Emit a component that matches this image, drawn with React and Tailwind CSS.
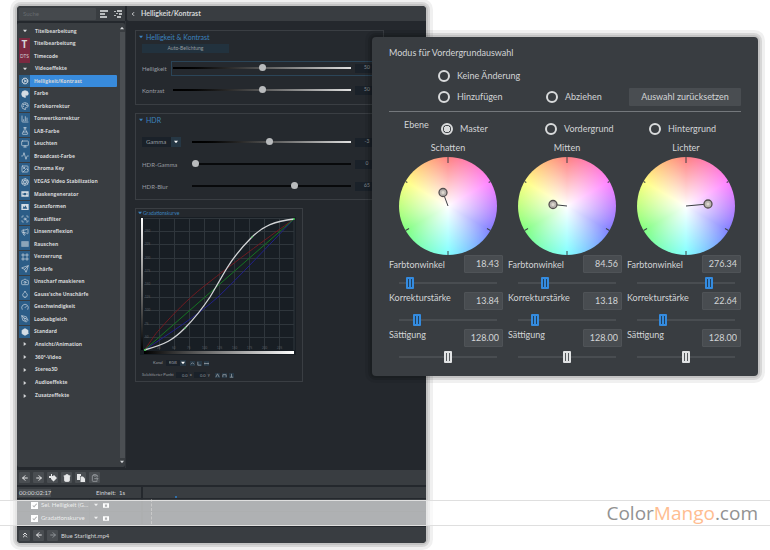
import React from "react";
import {
  Activity, ArrowLeft, ArrowRight, Aperture, BarChart3, Camera, ChevronsUp,
  ClipboardPaste, Copy, Droplet, FlaskConical, Gauge, Hexagon, Image, Monitor,
  Palette, PenTool, Send, Trash2, Megaphone, Cog, ChevronLeft, Diamond, Frame, ScanSearch,
} from "lucide-react";

const shadow =
  "shadow-[0_0_0_2px_rgba(0,0,0,0.09),0_0_0_4px_rgba(0,0,0,0.1),0_0_0_7px_rgba(0,0,0,0.06)]";

function Noise({ className }) {
  return (
    <svg viewBox="0 0 24 24" className={className}>
      <path fill="#9fb4c6" d="M1 4h22v16H1z" />
      <path stroke="#6f8ea8" strokeWidth="1" d="M1 8h22M1 12h22M1 16h22M6 4v16M12 4v16M18 4v16" />
    </svg>
  );
}

function Mask({ className }) {
  return (
    <svg viewBox="0 0 24 24" className={className} fill="currentColor" fillRule="evenodd">
      <path d="M1 4h22v16H1zM5 8l4 4-4 4zM12 8a4 4 0 1 0 .1 0zM19 8v8l-2-4z" />
    </svg>
  );
}

function Punch({ className }) {
  return (
    <svg viewBox="0 0 24 24" className={className} fill="currentColor" fillRule="evenodd">
      <path d="M1 3h22v18H1zM5 17l3-8 3 4 2-6 6 10z" />
    </svg>
  );
}

const effects = [
  ["Helligkeit/Kontrast", Cog],
  ["Farbe", Palette, true],
  ["Farbkorrektur", Palette],
  ["Tonwertkorrektur", BarChart3],
  ["LAB-Farbe", FlaskConical],
  ["Leuchten", Monitor],
  ["Broadcast-Farbe", Activity],
  ["Chroma Key", Image],
  ["VEGAS Video Stabilization", Aperture],
  ["Maskengenerator", Mask],
  ["Stanzformen", Punch],
  ["Kunstfilter", ScanSearch],
  ["Linsenreflexion", Megaphone],
  ["Rauschen", Noise],
  ["Verzerrung", Frame],
  ["Schärfe", Send],
  ["Unscharf maskieren", Camera],
  ["Gauss'sche Unschärfe", Droplet],
  ["Geschwindigkeit", Gauge],
  ["Lookabgleich", PenTool],
  ["Standard", Hexagon, true],
];

function Triangle({ dir = "down", className = "" }) {
  const d = { down: "M0 1h6L3 5z", up: "M0 5h6L3 1z", right: "M1 0v6l4-3z" }[dir];
  return (
    <svg viewBox="0 0 6 6" className={`size-[4px] shrink-0 fill-current ${className}`}>
      <path d={d} />
    </svg>
  );
}

function Group({ open, children }) {
  return (
    <button type="button" className="flex min-h-0 flex-1 items-center gap-[8px] pl-[6px] text-left">
      <Triangle dir={open ? "down" : "right"} />
      {children}
    </button>
  );
}

function TitleItem({ mark, big, children }) {
  return (
    <button type="button" className="flex min-h-0 flex-1 items-center gap-[4px] pl-[2px] text-left">
      <span className={`flex h-full w-[11px] items-center justify-center bg-[#7a2940] ${big ? "text-[10px]" : "text-[5px] font-normal"}`}>
        {mark}
      </span>
      {children}
    </button>
  );
}

function Sidebar() {
  return (
    <aside className="flex w-[108px] shrink-0 flex-col">
      <div className="flex h-[15px] items-center bg-[#393d41] pl-[2px]">
        <input
          aria-label="Suche"
          placeholder="Suche"
          className="h-[12px] w-[77px] rounded-[1px] bg-[#45494d] px-[4px] text-[6px] outline-none placeholder:text-[#666b6f]"
        />
        <button type="button" aria-label="Liste" className="ml-[4px]">
          <svg viewBox="0 0 8 8" className="size-[8px] fill-[#b9bcbe]"><path d="M0 0h8v2H0zM0 3h5v2H0zM0 6h7v2H0z" /></svg>
        </button>
        <button type="button" aria-label="Struktur" className="ml-[6px]">
          <svg viewBox="0 0 8 8" className="size-[8px] fill-[#b9bcbe]"><path d="M0 1h2v1H0zM3 0h5v2H3zM2 3h2v1H2zM5 3h3v2H5zM0 5h2v1H0zM3 6h4v2H3z" /></svg>
        </button>
      </div>
      <div className="mt-[2px] flex h-[444px] rounded-[2px] bg-[#393d41] font-['Open_Sans','Noto_Sans',sans-serif] text-[5px] leading-none font-bold">
        <nav className="flex min-w-0 flex-1 flex-col pt-[2px] whitespace-nowrap">
          <div className="flex h-[50px] flex-col">
            <Group open>Titelbearbeitung</Group>
            <TitleItem mark="T" big>Titelbearbeitung</TitleItem>
            <TitleItem mark="DTS">Timecode</TitleItem>
            <Group open>Videoeffekte</Group>
          </div>
          <div className="flex h-[263px] flex-col">
            {effects.map(([name, Icon, solid], i) => (
              <button key={name} type="button" className="flex min-h-0 flex-1 items-center pl-[2px] text-left">
                <span className="flex h-[12px] w-[11px] items-center justify-center bg-[#2c5d87] text-[#d5dde4]">
                  <Icon className="size-[8px]" fill={solid ? "currentColor" : "none"} strokeWidth={2} />
                </span>
                <span className={i === 0 ? "flex h-[12px] w-[87px] items-center rounded-r-[1px] bg-[#388bdc] pl-[4px]" : "pl-[4px]"}>
                  {name}
                </span>
              </button>
            ))}
          </div>
          <div className="flex h-[64px] flex-col">
            <Group>Ansicht/Animation</Group>
            <Group>360°-Video</Group>
            <Group>Stereo3D</Group>
            <Group>Audioeffekte</Group>
            <Group>Zusatzeffekte</Group>
          </div>
        </nav>
        <div className="flex w-[6px] flex-col items-center gap-[2px] py-[3px]">
          <Triangle dir="up" />
          <div className="w-[5px] flex-1 bg-[#4b4f53]" />
          <Triangle />
        </div>
      </div>
    </aside>
  );
}

const roundThumb =
  "[&::-webkit-slider-thumb]:appearance-none [&::-webkit-slider-thumb]:size-[7px] [&::-webkit-slider-thumb]:rounded-full [&::-webkit-slider-thumb]:bg-[#b9bbbd] [&::-webkit-slider-thumb]:-mt-[3px] [&::-webkit-slider-runnable-track]:h-[2px]";

function PanelSlider({ label, value, out, control, wide, dark, active }) {
  return (
    <div className="flex h-[22px] items-center text-[6px]">
      <div className={wide ? "w-[29px] shrink-0" : "w-[48px] shrink-0"}>{control || label}</div>
      <div className={`flex h-[15px] flex-1 items-center border pl-[1px] ${active ? "border-[#2b4558]" : "border-transparent"}`}>
        <input
          type="range"
          aria-label={label}
          defaultValue={value}
          step="0.1"
          className={`h-[8px] min-w-0 flex-1 appearance-none bg-transparent ${roundThumb} ${
            dark
              ? "[&::-webkit-slider-runnable-track]:bg-[#08090b]"
              : "[&::-webkit-slider-runnable-track]:bg-linear-to-r [&::-webkit-slider-runnable-track]:from-black [&::-webkit-slider-runnable-track]:to-[#e2e2e2]"
          }`}
        />
        <output className="ml-[4px] flex h-[9px] w-[24px] items-center justify-center bg-[#1a2129] text-[5px] text-[#8b9196]">{out}</output>
      </div>
    </div>
  );
}

function Panel({ title, className = "", children }) {
  return (
    <section className={`border border-[#3a3e43] bg-[#25292e] pr-[3px] pl-[6px] ${className}`}>
      <h3 className="-ml-[3px] flex h-[12px] items-center gap-[3px] text-[#3c83bf]">
        <Triangle />
        {title}
      </h3>
      {children}
    </section>
  );
}

function Curves() {
  const xs = [159, 174, 189, 204, 219, 234, 249, 264, 279];
  const ys = [231, 244, 258, 271, 284, 297, 310, 324, 337];
  return (
    <svg viewBox="140 217 156 138" className="-ml-[2px] block h-[138px] w-[156px]" fill="none">
      <defs>
        <linearGradient id="fadeY" x2="0" y2="1"><stop stopColor="#fff" /><stop offset="1" stopColor="#000" /></linearGradient>
        <linearGradient id="fadeX"><stop stopColor="#000" /><stop offset="1" stopColor="#fff" /></linearGradient>
      </defs>
      <path fill="#181e24" d="M140 217h156v138H140z" />
      <path stroke="#2f363c" d={xs.map((x) => `M${x}.5 218V350`).join("") + ys.map((y) => `M144 ${y}.5H294`).join("") + "M144 218.5H294V350"} />
      <path fill="url(#fadeY)" d="M141 218h2v132h-2z" />
      <path fill="url(#fadeX)" d="M144 351h150v3H144z" />
      <g fill="#5a6065" fontSize="3" fontFamily="Lato, sans-serif">
        {ys.map((y, i) => <text key={y} x="145" y={y + 1}>{250 - i * 25}</text>)}
        {xs.map((x, i) => <text key={x} x={x - 2} y="349">{(i + 1) * 25}</text>)}
      </g>
      <path stroke="#701a20" d="M144.5 350C151 341 155 334 159 330C175 312 187 300 203 287C240 258 270 236 294 219" />
      <path stroke="#22208a" d="M144.5 350C170 333 198 315 218 297C238 278 270 244 294 219" />
      <path stroke="#157422" d="M144.5 350L294 219" />
      <path stroke="#d4d6d8" strokeWidth="1.3" d="M144.5 350C166 344 173 340 185 328C195 318 202 309 210 297C216 287 221 278 227 268C235 255 242 247 252 237C263 226 275 221 294 219" />
      <g fill="#35c04a">
        <circle cx="145" cy="350" r="1" /><circle cx="185" cy="328" r=".8" />
        <circle cx="252" cy="237" r=".8" /><circle cx="294" cy="219" r="1" />
      </g>
    </svg>
  );
}

function TinyButtons({ paths, names }) {
  return paths.map((d, i) => (
    <button key={d} type="button" aria-label={names[i]} className="flex size-[5px] shrink-0 items-center bg-[#263744]">
      <svg viewBox="0 0 6 6" className="size-full" fill="none" stroke="#8e969d"><path d={d} /></svg>
    </button>
  ));
}

function MainPane() {
  return (
    <div className="flex min-w-0 flex-1 flex-col">
      <header className="ml-[2px] flex h-[15px] items-center gap-[5px] rounded-bl-[2px] bg-[#393d41] pl-[3px] text-[7px] font-bold">
        <button type="button" aria-label="Zurück"><ChevronLeft className="size-[6px]" strokeWidth={4} /></button>
        <h2>Helligkeit/Kontrast</h2>
      </header>
      <div className="flex flex-1 flex-col gap-[8px] border-l border-[#303439] pt-[9px] pr-[42px] pl-[9px] text-[#979ca0]">
        <Panel title="Helligkeit & Kontrast" className="h-[75px] text-[7px]">
          <button type="button" className="mt-[1px] block h-[9px] w-[87px] bg-[#22323e] text-[5px] leading-none">Auto-Belichtung</button>
          <div className="mt-[4px]">
            <PanelSlider label="Helligkeit" value={50.3} out="50" wide active />
            <PanelSlider label="Kontrast" value={50.3} out="50" wide />
          </div>
        </Panel>
        <Panel title="HDR" className="h-[87px] text-[7px]">
          <div className="mt-[5px]">
            <PanelSlider
              label="Gamma"
              value={48.4}
              out="-3"
              control={
                <div className="relative flex w-[39px] items-center">
                  <select aria-label="HDR-Modus" className="h-[10px] w-full appearance-none bg-[#1a2129] pl-[4px] text-[6px] leading-none">
                    <option>Gamma</option>
                  </select>
                  <span className="pointer-events-none absolute right-0 flex h-[10px] w-[10px] items-center justify-center bg-[#263744] text-white">
                    <Triangle />
                  </span>
                </div>
              }
            />
            <PanelSlider label="HDR-Gamma" value={0} out="0" dark />
            <PanelSlider label="HDR-Blur" value={65.1} out="65" dark />
          </div>
        </Panel>
        <section className="h-[174px] w-[168px] border border-[#3a3e43] pl-[6px] text-[4px] leading-none">
          <h3 className="-ml-[4px] flex h-[8px] items-center gap-[1px] text-[5px] text-[#3c83bf]"><Triangle />Gradationskurve</h3>
          <Curves />
          <div className="mt-[4px] flex h-[8px] items-center gap-[2px] pl-[11px]">
            <label htmlFor="channel" className="mr-[1px]">Kanal</label>
            <span className="relative flex items-center">
              <select id="channel" className="h-[6px] w-[20px] appearance-none bg-[#1a2129] pl-[3px] leading-none"><option>RGB</option></select>
              <span className="pointer-events-none absolute right-0 bg-[#263744] p-[1px] text-white"><Triangle /></span>
            </span>
            <span className="ml-[2px] flex gap-[2px]">
              <TinyButtons names={["Kurve", "Zurücksetzen", "Speichern"]} paths={["M1 4l2-2 2 2", "M1 1v4h4", "M0 3h6M1 2v2M5 2v2"]} />
            </span>
          </div>
          <div className="mt-[4px] flex h-[8px] items-center gap-[2px]">
            <span>Selektierter Punkt</span>
            <input aria-label="x" defaultValue="0.0" className="h-[6px] w-[12px] bg-[#1a2129] text-right outline-none" />x
            <input aria-label="y" defaultValue="0.0" className="h-[6px] w-[12px] bg-[#1a2129] text-right outline-none" />y
            <span className="ml-[3px] flex gap-[2px]">
              <TinyButtons names={["Spitze", "Bogen", "Löschen"]} paths={["M1 5l2-4 2 4", "M1 5V2h4v3", "M1 5h4M3 1v4"]} />
            </span>
          </div>
        </section>
      </div>
    </div>
  );
}

function KeyframeIcon({ className }) {
  return (
    <svg viewBox="0 0 8 8" className={className} fill="currentColor">
      <path d="M0 2h2V0h1v2h1L5 1l3 3-3.500 3.500L2 5V4H0z" />
    </svg>
  );
}

function Tool({ label, icon: Icon, dim, solid }) {
  return (
    <button type="button" aria-label={label} className={`flex size-[11px] items-center justify-center rounded-[1px] bg-[#4a4e52] ${dim ? "text-[#8d9195]" : "text-[#e6e7e8]"}`}>
      <Icon className="size-[8px]" strokeWidth={3} fill={solid ? "currentColor" : "none"} />
    </button>
  );
}

function CopyIcon({ className }) {
  return (
    <svg viewBox="0 0 8 8" className={className} fill="currentColor">
      <path d="M0 0h4v2H3v4H0z" /><path d="M3.500 2.500H6L8 4.500V8H3.500z" />
    </svg>
  );
}

function Track({ name }) {
  return (
    <div className="flex h-[13px] items-center border-b border-[#33373b]">
      <label className="flex w-[72px] items-center gap-[3px] pl-[14px] whitespace-nowrap">
        <span className="relative flex">
          <input type="checkbox" defaultChecked className="peer size-[7px] appearance-none bg-white" />
          <svg viewBox="0 0 8 8" className="pointer-events-none absolute inset-0 hidden size-[7px] peer-checked:block" fill="none" stroke="#393d41" strokeWidth="1.2"><path d="M2 4l1.500 1.500L6.500 2" /></svg>
        </span>
        {name}
      </label>
      <span className="flex h-full w-[52px] items-center gap-[5px] border-l border-[#33373b] pl-[4px]">
        <Triangle />
        <svg viewBox="0 0 8 6" className="h-[5px] w-[6px]"><path fill="#fff" fillRule="evenodd" d="M0 0h8v6H0zM2.500 1.500v3h3v-3z" /></svg>
      </span>
      <span className="h-full flex-1 border-l-2 border-[#33373b]"><span className="ml-[8px] block h-full w-0 border-l border-dashed border-[#777]" /></span>
    </div>
  );
}

function EditorWindow() {
  return (
    <main className={`overflow-hidden rounded-[4px] bg-[#24282d] text-[#d4d6d8] ${shadow}`}>
      <div className="flex h-[462px]">
        <Sidebar />
        <MainPane />
      </div>
      <div className="mt-[2px] flex h-[15px] items-center gap-[3px] bg-[#393d41] pl-[2px]">
        <Tool label="Rückgängig" icon={ArrowLeft} />
        <Tool label="Wiederholen" icon={ArrowRight} />
        <Tool label="Keyframe" icon={KeyframeIcon} />
        <Tool label="Löschen" icon={Trash2} solid />
        <Tool label="Kopieren" icon={CopyIcon} />
        <Tool label="Einfügen" icon={ClipboardPaste} dim />
      </div>
      <div className="mt-[2px] flex h-[11px] items-center bg-[#393d41] text-[6px] leading-none">
        <span className="ml-[2px] bg-[#4a4e52] py-[1px]">00:00:02:17</span>
        <span className="ml-auto mr-[16px]">Einheit:&nbsp; 1s</span>
        <span className="h-full w-[285px] border-l-2 border-[#24282d]"><i className="mt-[9px] ml-[32px] block size-[2px] bg-[#2f6ea8]" /></span>
      </div>
      <div className="mt-[1px] bg-[#393d41] text-[6px] leading-none">
        <Track name="Sel. Helligkeit (G..." />
        <Track name="Gradationskurve" />
      </div>
      <footer className="mt-[2px] flex h-[16px] items-center gap-[3px] bg-[#393d41] pl-[2px] text-[6px]">
        <Tool label="Nach oben" icon={ChevronsUp} />
        <Tool label="Zurück" icon={ArrowLeft} />
        <Tool label="Vor" icon={ArrowRight} dim />
        <span>Blue Starlight.mp4</span>
      </footer>
    </main>
  );
}

function Radio({ name, label, checked }) {
  return (
    <label className="flex items-center gap-[7px]">
      <input
        type="radio"
        name={name}
        defaultChecked={checked}
        className="size-[12px] appearance-none rounded-full border-2 border-[#d9dbdc] checked:bg-[radial-gradient(circle,#d9dbdc_3px,transparent_3px)]"
      />
      {label}
    </label>
  );
}

const gripBase =
  "[&::-webkit-slider-runnable-track]:h-[2px] [&::-webkit-slider-runnable-track]:bg-[#494d51] [&::-webkit-slider-thumb]:appearance-none [&::-webkit-slider-thumb]:w-[8px] [&::-webkit-slider-thumb]:h-[12px] [&::-webkit-slider-thumb]:-mt-[5px] [&::-webkit-slider-thumb]:rounded-[1px] [&::-webkit-slider-thumb]:bg-no-repeat [&::-webkit-slider-thumb]:bg-center [&::-webkit-slider-thumb]:bg-size-[8px_8px]";
const gripBlue =
  "[&::-webkit-slider-thumb]:bg-[#348bdf] [&::-webkit-slider-thumb]:bg-[linear-gradient(90deg,transparent_2px,#213f5b_2px,#213f5b_3px,transparent_3px,transparent_5px,#213f5b_5px,#213f5b_6px,transparent_6px)]";
const gripLight =
  "[&::-webkit-slider-thumb]:bg-[#e1e3e4] [&::-webkit-slider-thumb]:bg-[linear-gradient(90deg,transparent_2px,#55595c_2px,#55595c_3px,transparent_3px,transparent_5px,#55595c_5px,#55595c_6px,transparent_6px)]";

function Setting({ label, value, pos, light, first }) {
  return (
    <div className="h-[37px]">
      <label className={`flex justify-between ${first ? "items-center" : "items-start"}`}>
        <span className="leading-[11px]">{label}</span>
        <input defaultValue={value} className="h-[18px] w-[39px] rounded-[1px] border border-[#4f5357] bg-[#484c50] pr-[3px] pb-[1px] text-right outline-none" />
      </label>
      <input
        type="range"
        aria-label={label}
        defaultValue={pos}
        step="0.1"
        className={`mt-[4px] ml-[10px] block h-[12px] w-[98px] appearance-none bg-transparent ${gripBase} ${light ? gripLight : gripBlue}`}
      />
    </div>
  );
}

function Wheel({ title, x, y, values, spots }) {
  return (
    <div>
      <h3 className="ml-[10px] w-[98px] text-center leading-[12px]">{title}</h3>
      <div className="mt-[3px] ml-[10px] size-[98px] rounded-full bg-[radial-gradient(closest-side,white,transparent),conic-gradient(#ff8080,#ff80ff,#8080ff,#80ffff,#80ff80,#ffff80,#ff8080)]">
        <svg viewBox="0 0 98 98" className="size-full" stroke="#3b3f43">
          {[0, 60, 120, 180, 240, 300].map((a) => (
            <path key={a} d={a === 0 ? "M49 0v6" : a === 60 || a === 300 ? "M49 0v2" : "M49 0v4"} transform={`rotate(${a} 49 49)`} />
          ))}
          <path d={`M49 49L${x} ${y}`} />
          <circle cx={x} cy={y} r="4" fill="#b9b4b0" strokeWidth="1.3" stroke="#55504f" />
          <circle cx={x} cy={y} r="1.5" fill="#ddd8cf" stroke="none" />
        </svg>
      </div>
      <Setting label="Farbtonwinkel" value={values[0]} pos={spots[0]} first />
      <Setting label="Korrekturstärke" value={values[1]} pos={spots[1]} />
      <Setting label="Sättigung" value={values[2]} pos={spots[2]} light />
    </div>
  );
}

function SelectionDialog() {
  return (
    <section role="dialog" aria-label="Modus für Vordergrundauswahl" className={`absolute top-[37px] right-[12px] left-[372px] rounded-[4px] bg-[#393d41] px-[17px] pt-[10px] pb-[10px] text-[9px] text-[#d2d4d6] ${shadow}`}>
      <h2 className="leading-[12px]">Modus für Vordergrundauswahl</h2>
      <div className="mt-[7px] grid grid-cols-[108px_1fr_112px] items-center pl-[49px]">
        <div className="col-span-3 flex h-[20px] items-center"><Radio name="mode" label="Keine Änderung" /></div>
        <Radio name="mode" label="Hinzufügen" />
        <Radio name="mode" label="Abziehen" />
        <button type="button" className="my-[2px] h-[18px] rounded-[1px] bg-[#494d51]">Auswahl zurücksetzen</button>
      </div>
      <hr className="mt-[3px] border-[#74787c]" />
      <div className="mt-[7px] flex h-[19px] items-center pl-[15px]">
        <span className="w-[37px] self-start leading-[12px]">Ebene</span>
        <div className="grid flex-1 grid-cols-[104px_104px_auto]">
          <Radio name="layer" label="Master" checked />
          <Radio name="layer" label="Vordergrund" />
          <Radio name="layer" label="Hintergrund" />
        </div>
      </div>
      <div className="mt-[4px] grid grid-cols-3 gap-[5px]">
        <Wheel title="Schatten" x={44} y={35.5} values={["18.43", "13.84", "128.00"]} spots={[7.5, 15.5, 50]} />
        <Wheel title="Mitten" x={35} y={47.5} values={["84.56", "13.18", "128.00"]} spots={[25, 14.5, 50]} />
        <Wheel title="Lichter" x={71} y={47} values={["276.34", "22.64", "128.00"]} spots={[76, 24.5, 50]} />
      </div>
    </section>
  );
}

export default function App() {
  return (
    <div className="relative min-h-screen overflow-hidden bg-white pt-[6px] pr-[344px] pb-[7px] pl-[17px] font-['Lato','Noto_Sans',sans-serif]">
      <EditorWindow />
      <SelectionDialog />
      <div className="absolute inset-x-0 top-[500px] flex h-[26px] items-center justify-end border-y border-[#dfdfdf] bg-white/60 pr-[12px] font-['Open_Sans',sans-serif] text-[19px] leading-none text-[#929292]">
        Color<span className="text-[#ffbd91]">Mango</span>.com
      </div>
    </div>
  );
}
